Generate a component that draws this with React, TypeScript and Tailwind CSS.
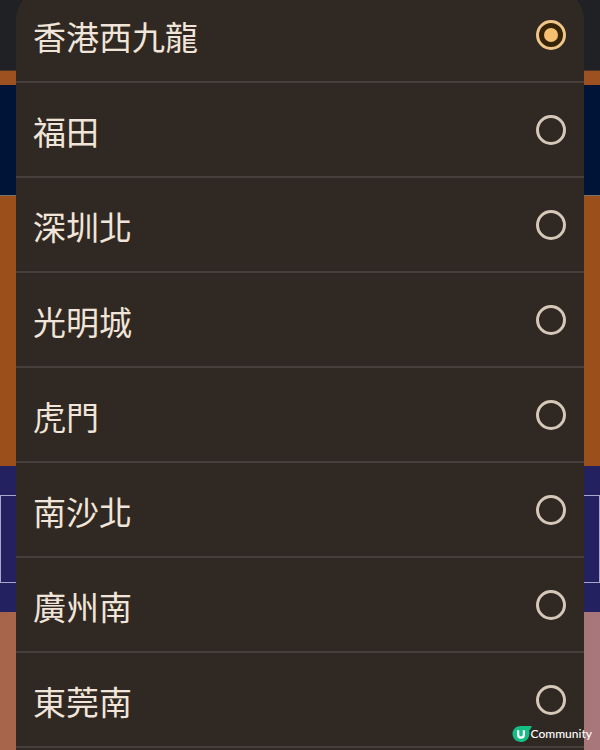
import {useState} from 'react';
import type {FC} from 'react';

type StationProps = {
  name: string;
  checked: boolean;
  onSelect: (name: string) => void;
};

const stations = ['香港西九龍', '福田', '深圳北', '光明城', '虎門', '南沙北', '廣州南', '東莞南'];

const Station: FC<StationProps> = ({name, checked, onSelect}) => (
  <label className="flex h-[95px] cursor-pointer items-center justify-between border-b-2 border-[#463f3b] pr-[18px] pl-[17px]">
    <span className="pt-0.5 text-[33px] leading-10 text-[#f0e5d8]">{name}</span>
    <input
      type="radio"
      name="station"
      value={name}
      checked={checked}
      onChange={() => onSelect(name)}
      className="grid size-[30px] shrink-0 appearance-none place-items-center rounded-full border-3 border-[#d6c8b9] before:size-[14px] before:rounded-full checked:border-[#efc688] checked:bg-[#352408] checked:before:bg-[#f6c071]"
    />
  </label>
);

const Backdrop: FC = () => (
  <div className="flex min-h-screen flex-col">
    <div className="h-[71px] border-b border-[#4a3528] bg-[#202125]" />
    <div className="h-[14px] bg-[#9d5120]" />
    <div className="h-[111px] border-b border-[#77706f] bg-[#001437]" />
    <div className="h-[270px] bg-[#9b4f1b]" />
    <div className="bg-[#23215f] pt-[29px] pb-[29px]">
      <div className="h-[88px] border border-[#aaa7cd]" />
    </div>
    <div className="grow bg-linear-to-r from-[#a6654b] to-[#a8777b]" />
  </div>
);

const Watermark: FC = () => (
  <div className="absolute right-2 bottom-1.5 flex items-center">
    <svg viewBox="0 0 20 18" className="-mr-px h-[18px] w-5" aria-hidden="true">
      <path d="M8.6 1H19.7C19.4 3.2 18.3 4.5 17.1 5.6C17.4 6.5 17.5 7.5 17.4 8.7C17.4 13.4 13.6 17 9 17C4.3 17 .5 13.4 .5 9C.5 4.5 4.1 1 8.6 1Z" fill="#13bd83" />
      <path d="M6.1 5.2V9.6C6.1 11.8 7.2 12.7 9 12.7C10.8 12.7 11.9 11.8 11.9 9.6V5.2" fill="none" stroke="#fff" strokeWidth="2.3" />
    </svg>
    <span className="font-['Lato','Liberation_Sans',sans-serif] text-[12px] leading-5 font-medium text-white" lang="en">
      Community
    </span>
  </div>
);

const App: FC = () => {
  const [selected, setSelected] = useState('香港西九龍');

  return (
    <main className="relative h-screen overflow-hidden font-['Noto_Sans_CJK_TC',sans-serif]" lang="zh-Hant">
      <Backdrop />
      <div className="absolute inset-x-4 -top-3 -bottom-3 overflow-hidden rounded-t-[32px] bg-[#302822]" role="radiogroup">
        {stations.map((name) => (
          <Station key={name} name={name} checked={selected === name} onSelect={setSelected} />
        ))}
      </div>
      <Watermark />
    </main>
  );
};

export default App;
